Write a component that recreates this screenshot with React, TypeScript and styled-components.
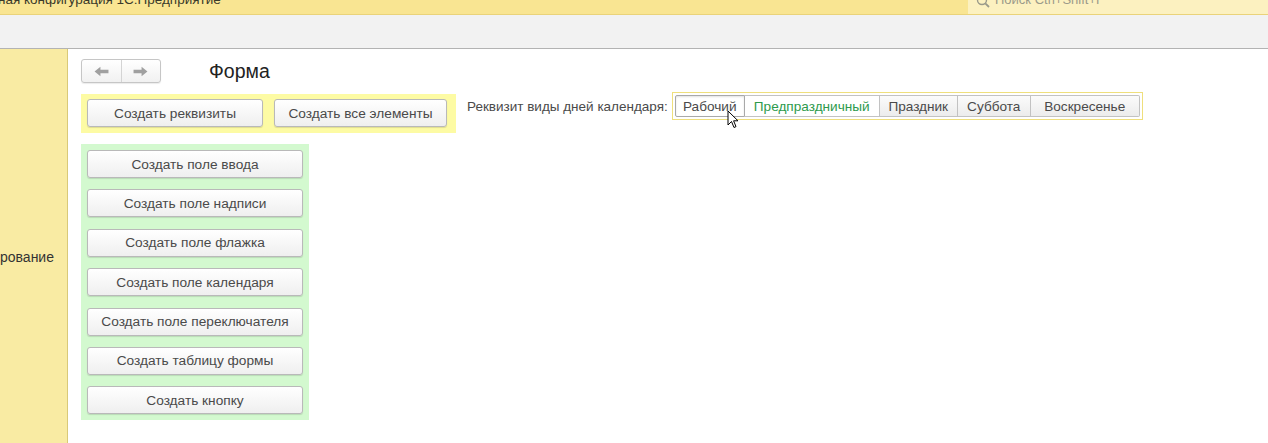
import React from "react";
import styled, { createGlobalStyle } from "styled-components";

const Global = createGlobalStyle`
  html, body { margin: 0; padding: 0; background: #fff; }
  body { font-family: "Liberation Sans", Arial, sans-serif; }
  * { box-sizing: border-box; }
`;

const Page = styled.div`
  width: 1268px;
  height: 443px;
  display: flex;
  flex-direction: column;
  overflow: hidden;
  background: #fff;
`;

const TopBar = styled.div`
  height: 15px;
  flex: none;
  background: #f9e592;
  border-bottom: 1px solid #ead37a;
  display: flex;
  justify-content: space-between;
  overflow: hidden;
`;

const AppTitle = styled.div`
  font-size: 13.5px;
  color: #3a3a2a;
  margin-top: -8px;
  margin-left: -2px;
  white-space: nowrap;
  line-height: 16px;
`;

const Search = styled.div`
  width: 300px;
  background: #fcf1c0;
  display: flex;
  align-items: flex-start;
  gap: 5px;
  padding-left: 8px;
  overflow: hidden;
`;

const SearchText = styled.span`
  font-size: 13px;
  color: #9a9a8a;
  margin-top: -8px;
  line-height: 16px;
  white-space: nowrap;
`;

const Toolbar = styled.div`
  height: 34px;
  flex: none;
  background: #f2f2f2;
  border-bottom: 1px solid #b3b3b3;
`;

const Body = styled.div`
  flex: 1;
  display: flex;
  min-height: 0;
`;

const Sidebar = styled.div`
  width: 68px;
  flex: none;
  background: #f9eba3;
  border-right: 1px solid #d9c978;
  padding-top: 200px;
  overflow: hidden;
`;

const SideText = styled.div`
  font-size: 14px;
  color: #333;
  white-space: nowrap;
`;

const Main = styled.div`
  flex: 1;
  padding: 10px 13px;
  display: flex;
  flex-direction: column;
`;

const HeaderRow = styled.div`
  display: flex;
  align-items: center;
  height: 24px;
`;

const NavGroup = styled.div`
  display: flex;
  width: 80px;
  height: 24px;
  border: 1px solid #c6c6c6;
  border-radius: 3px;
  background: linear-gradient(#ffffff, #f1f1f1);
  box-shadow: 0 1px 1px rgba(0, 0, 0, 0.08);
`;

const NavBtn = styled.div<{ $first?: boolean }>`
  flex: 1;
  display: flex;
  align-items: center;
  justify-content: center;
  border-right: ${(p) => (p.$first ? "1px solid #d4d4d4" : "none")};
`;

const Title = styled.div`
  margin-left: 48px;
  font-size: 19.5px;
  color: #222;
`;

const ActionRow = styled.div`
  display: flex;
  align-items: flex-start;
  margin-top: 11px;
`;

const YellowGroup = styled.div`
  display: flex;
  gap: 11px;
  padding: 5px 9px 6px 6px;
  background: #fdfba4;
`;

const Button = styled.div<{ $w: number }>`
  width: ${(p) => p.$w}px;
  height: 28px;
  flex: none;
  display: flex;
  align-items: center;
  justify-content: center;
  font-size: 13.7px;
  color: #4a4a4a;
  background: linear-gradient(#ffffff, #efefef);
  border: 1px solid #b9b9b9;
  border-radius: 3px;
  box-shadow: 0 1px 1px rgba(0, 0, 0, 0.12);
  white-space: nowrap;
`;

const FieldArea = styled.div`
  display: flex;
  align-items: center;
  margin-left: 11px;
  margin-top: -2px;
  height: 28px;
`;

const Label = styled.div`
  font-size: 13.5px;
  color: #4a4a4a;
  margin-right: 4px;
  white-space: nowrap;
`;

const RadioFrame = styled.div`
  display: flex;
  padding: 2px;
  border: 1px solid #efdf7c;
  height: 28px;
`;

const Segment = styled.div<{ $w: number; $selected?: boolean; $green?: boolean; $first?: boolean }>`
  position: relative;
  width: ${(p) => p.$w}px;
  height: 22px;
  display: flex;
  align-items: center;
  justify-content: center;
  font-size: 13.6px;
  color: ${(p) => (p.$green ? "#2d9a4c" : "#4a4a4a")};
  background: ${(p) =>
    p.$selected || p.$green ? "#ffffff" : "linear-gradient(#fbfbfb, #ececec)"};
  border: 1px solid ${(p) => (p.$selected ? "#a9a9a9" : "#c2c2c2")};
  border-left: ${(p) => (p.$first ? "1px solid #a9a9a9" : "none")};
  border-radius: ${(p) => (p.$first ? "2px 0 0 2px" : "0")};
  box-shadow: ${(p) => (p.$selected ? "inset 0 1px 2px rgba(0,0,0,0.12)" : "none")};
  white-space: nowrap;
  &:last-child { border-radius: 0 2px 2px 0; }
`;

const Cursor = styled.svg`
  position: absolute;
  left: 51px;
  top: 14px;
`;

const GreenGroup = styled.div`
  margin-top: 11px;
  width: 228px;
  padding: 6px;
  background: #d3f9cf;
  display: flex;
  flex-direction: column;
  gap: 11.4px;
`;

const LeftArrow = () => (
  <svg width="15" height="11" viewBox="0 0 14 10">
    <path d="M0.5 5 L6 0.6 L6 3.4 L13.5 3.4 L13.5 6.6 L6 6.6 L6 9.4 Z" fill="#a0a0a0" />
  </svg>
);

const RightArrow = () => (
  <svg width="15" height="11" viewBox="0 0 14 10">
    <path d="M13.5 5 L8 0.6 L8 3.4 L0.5 3.4 L0.5 6.6 L8 6.6 L8 9.4 Z" fill="#a0a0a0" />
  </svg>
);

const SearchIcon = () => (
  <svg width="14" height="14" viewBox="0 0 14 14" style={{ marginTop: -5 }}>
    <circle cx="6" cy="5" r="4.5" fill="none" stroke="#9a9a8a" strokeWidth="1.4" />
    <path d="M9.3 8.3 L13 12" stroke="#9a9a8a" strokeWidth="1.8" />
  </svg>
);

const segments = [
  { t: "Рабочий", w: 70, selected: true },
  { t: "Предпраздничный", w: 135, green: true },
  { t: "Праздник", w: 78 },
  { t: "Суббота", w: 73 },
  { t: "Воскресенье", w: 109 },
];

const greenButtons = [
  "Создать поле ввода",
  "Создать поле надписи",
  "Создать поле флажка",
  "Создать поле календаря",
  "Создать поле переключателя",
  "Создать таблицу формы",
  "Создать кнопку",
];

export default function App() {
  return (
    <Page>
      <Global />
      <TopBar>
        <AppTitle>ная конфигурация 1С:Предприятие</AppTitle>
        <Search>
          <SearchIcon />
          <SearchText>Поиск Ctrl+Shift+F</SearchText>
        </Search>
      </TopBar>
      <Toolbar />
      <Body>
        <Sidebar>
          <SideText>рование</SideText>
        </Sidebar>
        <Main>
          <HeaderRow>
            <NavGroup>
              <NavBtn $first>
                <LeftArrow />
              </NavBtn>
              <NavBtn>
                <RightArrow />
              </NavBtn>
            </NavGroup>
            <Title>Форма</Title>
          </HeaderRow>
          <ActionRow>
            <YellowGroup>
              <Button $w={176}>Создать реквизиты</Button>
              <Button $w={173}>Создать все элементы</Button>
            </YellowGroup>
            <FieldArea>
              <Label>Реквизит виды дней календаря:</Label>
              <RadioFrame>
                {segments.map((s, i) => (
                  <Segment
                    key={s.t}
                    $w={s.w}
                    $selected={s.selected}
                    $green={s.green}
                    $first={i === 0}
                  >
                    {s.t}
                    {s.selected && (
                      <Cursor width="12" height="19" viewBox="0 0 12 19">
                        <path
                          d="M1 1 L1 15 L4.5 11.5 L7 17.5 L9 16.6 L6.6 10.8 L11 10.8 Z"
                          fill="#fff"
                          stroke="#000"
                          strokeWidth="1"
                          strokeLinejoin="round"
                        />
                      </Cursor>
                    )}
                  </Segment>
                ))}
              </RadioFrame>
            </FieldArea>
          </ActionRow>
          <GreenGroup>
            {greenButtons.map((b) => (
              <Button key={b} $w={216}>
                {b}
              </Button>
            ))}
          </GreenGroup>
        </Main>
      </Body>
    </Page>
  );
}
